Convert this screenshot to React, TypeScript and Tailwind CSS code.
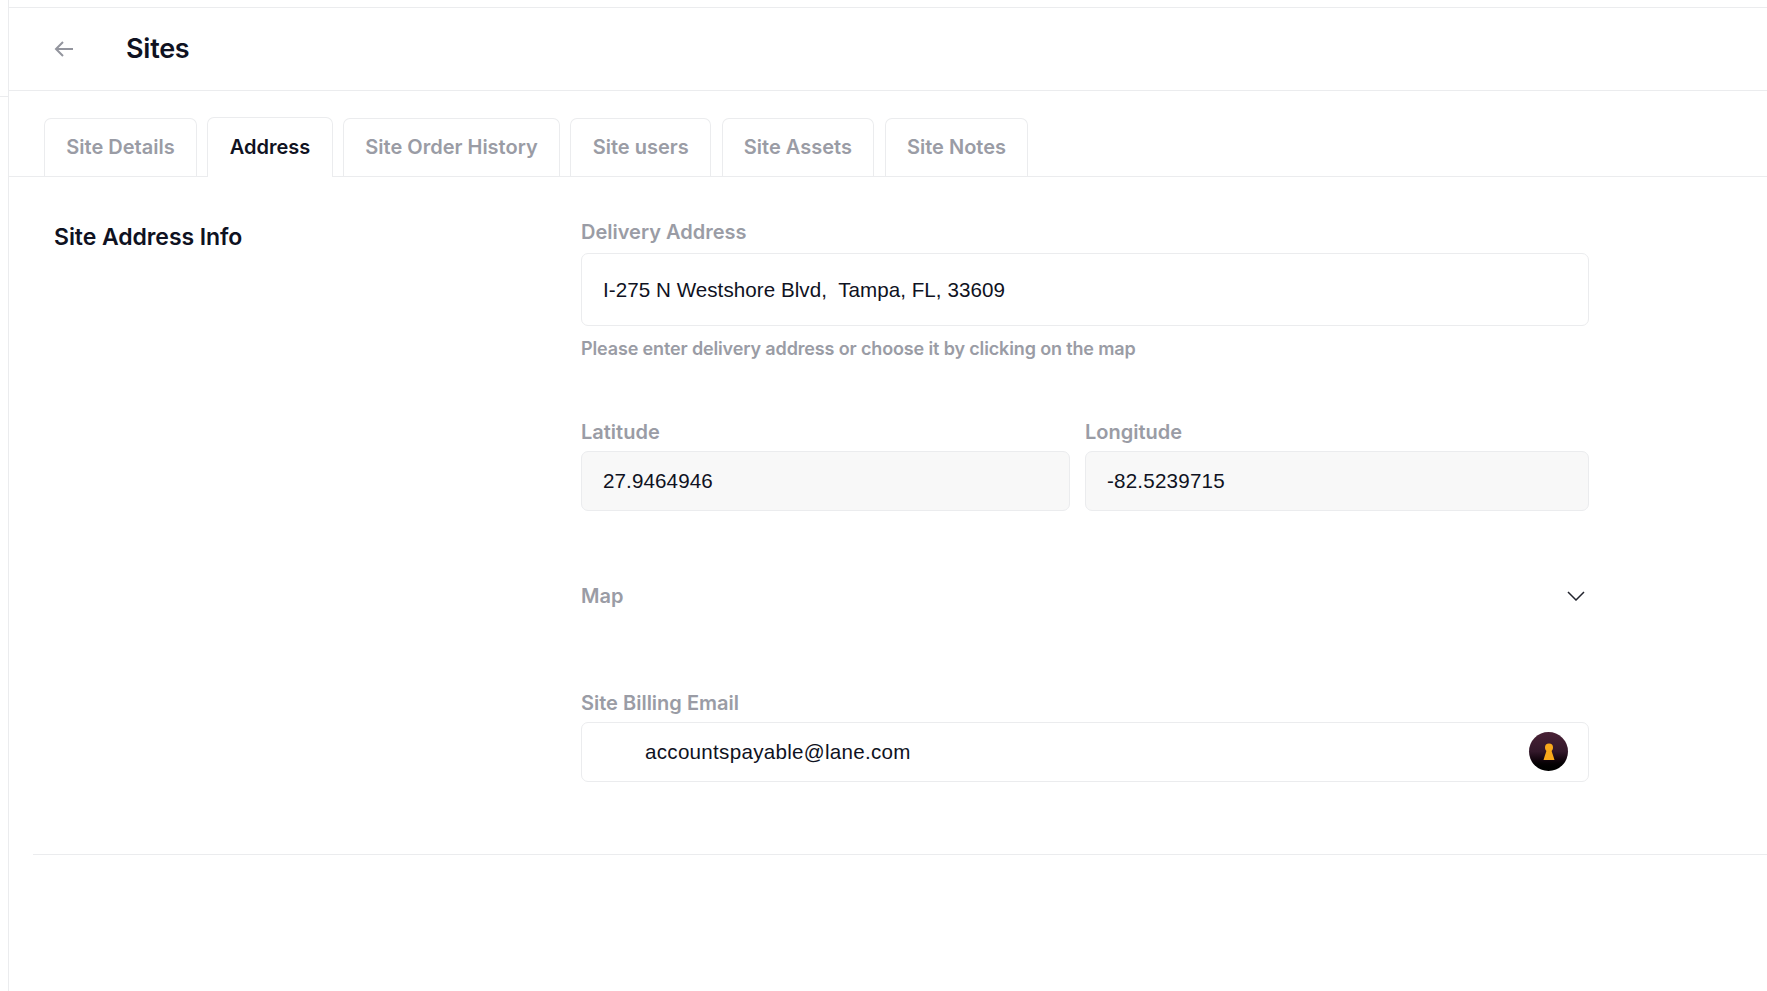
import React from 'react';

const tabs = ['Site Details', 'Address', 'Site Order History', 'Site users', 'Site Assets', 'Site Notes'];

const Label = ({ children }: { children: React.ReactNode }) => (
  <div className="font-['Inter',sans-serif] text-[20px] leading-[24px] font-semibold text-[#9a9ca5]">{children}</div>
);

const KeyIcon = () => (
  <div className="absolute right-[20px] top-[9px] w-[39px] h-[39px] rounded-full bg-gradient-to-b from-[#4a2236] via-[#33182a] to-black flex items-center justify-center">
    <svg width="12" height="18" viewBox="0 0 12 18">
      <circle cx="6" cy="4.5" r="4" fill="#f9a91b" />
      <path d="M4 6 H8 L11.5 17 H0.5 Z" fill="#f9a91b" />
    </svg>
  </div>
);

export default function App() {
  return (
    <div className="font-['Liberation_Sans',sans-serif] w-[1767px] h-[991px] overflow-hidden bg-white flex text-[#0f1222]">
      <div className="w-[9px] shrink-0 border-r border-[#ebecee] pt-[96px]">
        <div className="h-px bg-[#ebecee]" />
      </div>

      <div className="flex-1 min-w-0">
        <div className="mt-[7px] h-[84px] border-y border-[#ebecee] flex items-center pl-[43px]">
          <svg width="24" height="24" viewBox="0 0 24 24" fill="none" stroke="#93959e" strokeWidth="2">
            <path d="M21 12H4M11 5l-7 7 7 7" />
          </svg>
          <h1 className="ml-[50px] font-['Inter',sans-serif] text-[27px] font-semibold tracking-[-0.25px]">Sites</h1>
        </div>

        <div className="mt-[27px] h-[59px] border-b border-[#ebecee] flex items-end gap-[10.5px] pl-[35px] font-['Inter',sans-serif] text-[20px] font-semibold">
          {tabs.map((tab) =>
            tab === 'Address' ? (
              <div
                key={tab}
                className="relative -mb-px h-[60px] px-[21.3px] pb-[2px] flex items-center border border-b-0 border-[#ebecee] rounded-t-[7px] bg-white text-[#0f1222]"
              >
                {tab}
              </div>
            ) : (
              <div
                key={tab}
                className="h-[58px] px-[21.3px] pb-[1px] flex items-center border border-b-0 border-[#ebecee] rounded-t-[7px] text-[#9a9ca5]"
              >
                {tab}
              </div>
            ),
          )}
        </div>

        <div className="flex pl-[45px] pt-[42px]">
          <h2 className="w-[527px] shrink-0 mt-[4px] font-['Inter',sans-serif] text-[23px] leading-[28px] font-semibold tracking-[-0.07px]">Site Address Info</h2>

          <div className="w-[1008px]">
            <div className="mt-[1px]">
              <Label>Delivery Address</Label>
            </div>
            <div className="mt-[9px] h-[73px] px-[21px] pt-[1px] flex items-center border border-[#ebecee] rounded-[7px] text-[20.6px] tracking-[0.05px]">
              I-275 N Westshore Blvd,&nbsp; Tampa, FL, 33609
            </div>
            <p className="mt-[12px] font-['Inter',sans-serif] text-[18px] leading-[22px] font-semibold tracking-[-0.14px] text-[#9a9ca5]">
              Please enter delivery address or choose it by clicking on the map
            </p>

            <div className="mt-[60px] flex gap-[15px]">
              <div className="w-[489px]">
                <Label>Latitude</Label>
                <div className="mt-[7px] h-[60px] px-[21px] flex items-center border border-[#ebecee] rounded-[7px] bg-[#f8f8f8] text-[20.6px] tracking-[0.1px]">
                  27.9464946
                </div>
              </div>
              <div className="flex-1">
                <Label>Longitude</Label>
                <div className="mt-[7px] h-[60px] px-[21px] flex items-center border border-[#ebecee] rounded-[7px] bg-[#f8f8f8] text-[20.6px] tracking-[0.2px]">
                  -82.5239715
                </div>
              </div>
            </div>

            <div className="mt-[73px] flex items-center justify-between pr-[4px]">
              <Label>Map</Label>
              <svg width="18" height="10" viewBox="0 0 18 10" fill="none" stroke="#22242e" strokeWidth="1.5">
                <path d="M1 1l8 8 8-8" />
              </svg>
            </div>

            <div className="mt-[83px]">
              <Label>Site Billing Email</Label>
            </div>
            <div className="relative mt-[7px] h-[60px] pl-[63px] flex items-center border border-[#ebecee] rounded-[7px] text-[20.6px] tracking-[0.28px]">
              accountspayable@lane.com
              <KeyIcon />
            </div>
          </div>
        </div>

        <div className="mt-[72px] ml-[24px] h-px bg-[#ebecee]" />
      </div>
    </div>
  );
}
